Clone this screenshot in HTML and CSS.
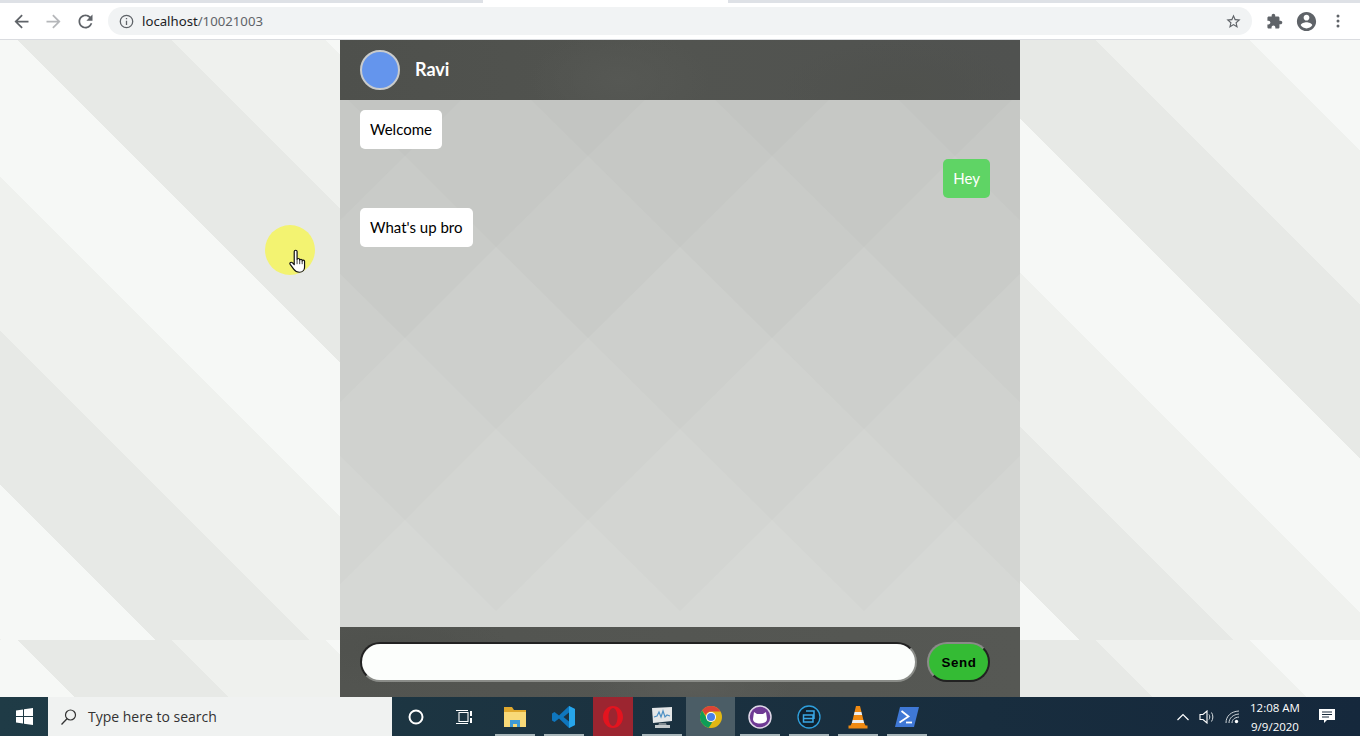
FILE: index.html
```html
<!DOCTYPE html>
<html lang="en">
<head>
<meta charset="utf-8"/>
<title>Chat</title>
<meta name="viewport" content="width=device-width">
<link rel="stylesheet" href="styles.css">
</head>
<body>
<div class="top-strip"><span class="tab-edge"></span></div>
<header class="toolbar">
	<button class="tool"><svg viewBox="0 0 24 24" width="21" height="21"><path fill="#5f6368" d="M20 11H7.83l5.59-5.59L12 4l-8 8 8 8 1.41-1.41L7.83 13H20v-2z"/></svg></button>
	<button class="tool"><svg viewBox="0 0 24 24" width="21" height="21"><path fill="#b5b7ba" d="M4 11h12.17l-5.59-5.59L12 4l8 8-8 8-1.41-1.41L16.17 13H4v-2z"/></svg></button>
	<button class="tool"><svg viewBox="0 0 24 24" width="21" height="21"><path fill="#5f6368" d="M17.65 6.35C16.2 4.9 14.21 4 12 4c-4.42 0-7.99 3.58-7.99 8s3.57 8 7.99 8c3.73 0 6.84-2.55 7.73-6h-2.08c-.82 2.33-3.04 4-5.65 4-3.31 0-6-2.69-6-6s2.69-6 6-6c1.66 0 3.14.69 4.22 1.78L13 11h7V4l-2.35 2.35z"/></svg></button>
	<div class="omnibox">
		<svg class="info" viewBox="0 0 14 14" width="15" height="15"><circle cx="7" cy="7" r="5.8" fill="none" stroke="#5f6368" stroke-width="1.2"/><path fill="#5f6368" d="M6.400 6.200h1.200v4.100H6.400zM6.400 3.700h1.200v1.300H6.400z"/></svg>
		<span class="url"><b>localhost</b>/10021003</span>
		<svg class="star" viewBox="0 0 24 24" width="17" height="17"><path fill="#5f6368" d="M22 9.24l-7.19-.62L12 2 9.19 8.63 2 9.24l5.46 4.73L5.82 21 12 17.27 18.18 21l-1.63-7.03L22 9.24zM12 15.4l-3.76 2.27 1-4.28-3.32-2.88 4.38-.38L12 6.1l1.71 4.04 4.38.38-3.32 2.88 1 4.28L12 15.4z"/></svg>
	</div>
	<button class="tool tool-first"><svg viewBox="0 0 24 24" width="17" height="17"><path fill="#5f6368" d="M20.5 11H19V7c0-1.1-.9-2-2-2h-4V3.5C13 2.12 11.88 1 10.5 1S8 2.12 8 3.5V5H4c-1.1 0-1.99.9-1.99 2v3.8H3.5c1.49 0 2.7 1.21 2.7 2.7s-1.21 2.7-2.7 2.7H2V20c0 1.1.9 2 2 2h3.8v-1.5c0-1.49 1.21-2.7 2.7-2.7 1.49 0 2.7 1.21 2.7 2.7V22H17c1.1 0 2-.9 2-2v-4h1.5c1.38 0 2.5-1.12 2.5-2.5S21.88 11 20.5 11z"/></svg></button>
	<button class="tool"><svg viewBox="0 0 24 24" width="23" height="23"><path fill="#5f6368" d="M12 2C6.48 2 2 6.48 2 12s4.48 10 10 10 10-4.48 10-10S17.52 2 12 2zm0 3c1.66 0 3 1.34 3 3s-1.34 3-3 3-3-1.34-3-3 1.34-3 3-3zm0 14.2c-2.5 0-4.71-1.28-6-3.22.03-1.99 4-3.08 6-3.08 1.99 0 5.97 1.09 6 3.08-1.29 1.94-3.5 3.22-6 3.22z"/></svg></button>
	<button class="tool"><svg viewBox="0 0 16 16" width="16" height="16"><circle cx="8" cy="3" r="1.500" fill="#5f6368"/><circle cx="8" cy="8" r="1.500" fill="#5f6368"/><circle cx="8" cy="13" r="1.500" fill="#5f6368"/></svg></button>
</header>

<main class="page">
	<section class="chat">
		<div class="chat-head">
			<span class="avatar"></span>
			<span class="name">Ravi</span>
		</div>
		<div class="messages">
			<p class="msg">Welcome</p>
			<p class="msg msg-me">Hey</p>
			<p class="msg">What's up bro</p>
		</div>
		<form class="chat-foot">
			<input class="chat-input" type="text" aria-label="Message">
			<button class="send" type="button">Send</button>
		</form>
	</section>
	<div class="pointer">
		<svg viewBox="0 0 16 24" width="19" height="26" preserveAspectRatio="none"><path fill="#fff" stroke="#111" stroke-width="1" stroke-linejoin="round" d="M4.4 2.3c0-1.6 2.4-1.6 2.4 0v7.4c0-1.3 2.2-1.3 2.2 0v.6c0-1.2 2.1-1.2 2.1 0v.8c0-1.1 2-1.1 2 .1v5.6c0 2.5-1.6 4.6-4.4 4.6-2.3 0-3.5-.9-4.6-2.6L1 14.200c-.9-1.500.9-2.700 2-1.400l1.400 1.700z"/><path stroke="#111" stroke-width=".7" d="M6.800 10v4M9 10.500v3.500M11.100 11v3"/></svg>
	</div>
</main>

<footer class="taskbar">
	<div class="start"><svg viewBox="0 0 17 17" width="17" height="17"><path fill="#fff" d="M0 2.500l7-1v6.500H0zM8 1.300L17 0v8H8zM0 9h7v6.500l-7-1zM8 9h9v8l-9-1.300z"/></svg></div>
	<div class="search">
		<svg viewBox="0 0 18 18" width="18" height="18"><circle cx="10.500" cy="7" r="5" fill="none" stroke="#333" stroke-width="1.200"/><path stroke="#333" stroke-width="1.300" d="M7 10.800l-5.500 5.700"/></svg>
		<span>Type here to search</span>
	</div>
	<div class="task-btn"><svg viewBox="0 0 16 16" width="16" height="16"><circle cx="8" cy="8" r="6.500" fill="none" stroke="#fff" stroke-width="2"/></svg></div>
	<div class="task-btn task-view"><svg viewBox="0 0 18 16" width="18" height="16"><path fill="none" stroke="#fff" stroke-width="1.100" d="M4 3.500h9v9H4zM1 1.500h12M1 14.500h12"/><path fill="#fff" d="M15 2h2v5h-2zM15 9h2v5h-2z"/></svg></div>
	<div class="apps">
		<div class="app running">
			<svg viewBox="0 0 24 24" width="24" height="24"><path fill="#e0a92e" d="M1 2h8l2 3h12v3H1z"/><path fill="#f8d978" d="M1 7h22v15H1z"/><path fill="#3f9bd8" d="M7 15h10v7h-3v-3h-4v3H7z"/></svg>
		</div>
		<div class="app running">
			<svg viewBox="0 0 24 24" width="24" height="24"><path fill="#0f76bd" d="M17 1l6 3v16l-6 3-10-9.500-4.500 3.500L0 15.500v-7L2.500 7 7 10.500zM17 7.500L11.500 12l5.500 4.500z"/><path fill="#27a5ea" d="M17 1l6 3v16l-6 3z"/></svg>
		</div>
		<div class="app app-opera">
			<svg viewBox="0 0 24 24" width="24" height="24"><path fill="#e3141f" fill-rule="evenodd" d="M12 1c5.500 0 10 4.900 10 11s-4.500 11-10 11S2 18.100 2 12 6.500 1 12 1zm0 2c-2.500 0-4.500 4-4.500 9s2 9 4.500 9 4.500-4 4.500-9-2-9-4.500-9z"/></svg>
		</div>
		<div class="app running">
			<svg viewBox="0 0 24 24" width="24" height="24"><path fill="#e4e7e8" d="M2 3l20-1v14L3 18z"/><path fill="#7f8a90" d="M9 18h7l1 3H8z"/><path fill="#c4cacc" d="M5 20h15v3H5z"/><path fill="none" stroke="#4c90c4" stroke-width="1.200" d="M4 12l3-1 2-4 2 5 2-6 2 6 2-2 3 1"/></svg>
		</div>
		<div class="app app-active">
			<svg viewBox="0 0 24 24" width="24" height="24"><circle cx="12" cy="12" r="11" fill="#e2b714"/><path fill="#db4437" d="M12 1a11 11 0 0 1 9.500 5.500H12a5.500 5.500 0 0 0-5.200 3.600L3.200 5.400A11 11 0 0 1 12 1z"/><path fill="#0f9d58" d="M3.200 5.400L7.500 13a5.500 5.500 0 0 0 5.800 4.300L9.700 22.800A11 11 0 0 1 3.200 5.400z"/><circle cx="12" cy="12" r="5" fill="#fff"/><circle cx="12" cy="12" r="4" fill="#4a80e8"/></svg>
		</div>
		<div class="app running">
			<svg viewBox="0 0 24 24" width="24" height="24"><circle cx="12" cy="12" r="11" fill="#6f3a94" stroke="#e0d8e8" stroke-width="1.500"/><path fill="#fff" d="M6 7l3 2h6l3-2 1 7c0 3-3 4.500-7 4.500S5 17 5 14z"/></svg>
		</div>
		<div class="app running">
			<svg viewBox="0 0 24 24" width="24" height="24"><circle cx="12" cy="12" r="11" fill="#0f2230" stroke="#2f9fdc" stroke-width="1.300"/><path fill="none" stroke="#3aa7e4" stroke-width="1.500" d="M9 6h8v8M6.500 10h9.500v7H6.500zM6.500 13.500h9.500"/></svg>
		</div>
		<div class="app running">
			<svg viewBox="0 0 24 24" width="24" height="24"><path fill="#f08a12" d="M10 1h4l1.500 6h-7zM7.800 10h8.400l1.200 5H6.600zM5.800 18h12.400l1.300 2.500h2v3h-19v-3h2z"/><path fill="#eee" d="M8.500 7h7l.7 3H7.800zM6.600 15h10.800l.8 3H5.800z"/></svg>
		</div>
		<div class="app running">
			<svg viewBox="0 0 24 24" width="24" height="24"><path fill="#3f78d6" d="M5 2h19l-5 20H0z"/><path fill="none" stroke="#fff" stroke-width="1.800" d="M6.500 6l7 5.500-9 6"/><path stroke="#fff" stroke-width="1.800" d="M11 17.500h6"/></svg>
		</div>
	</div>
	<div class="tray">
		<svg class="tray-chevron" viewBox="0 0 12 8" width="12" height="8"><path fill="none" stroke="#fff" stroke-width="1.200" d="M.5 7L6 1.500 11.500 7"/></svg>
		<svg class="tray-sound" viewBox="0 0 17 14" width="17" height="14"><path fill="none" stroke="#fff" stroke-width="1.100" d="M1 4.500h3L8 1v12L4 9.500H1z"/><path fill="none" stroke="#d7dde0" stroke-width="1" d="M10 4.500c1 1.500 1 3.500 0 5M12.500 2.500c1.800 2.700 1.800 6.300 0 9"/></svg>
		<svg class="tray-wifi" viewBox="0 0 15 14" width="15" height="14"><path fill="none" stroke="#cfd6da" stroke-width="1" d="M1 13C1 6 6 1.500 14 1M4 13c0-5 4-8.500 10-9M7 13c0-3.500 2.500-5.500 7-6"/><circle cx="11.500" cy="11.500" r="1.700" fill="#fff"/></svg>
		<div class="clock"><span>12:08 AM</span><span>9/9/2020</span></div>
		<svg class="tray-note" viewBox="0 0 17 15" width="17" height="15"><path fill="#fff" d="M0 0h16v11H8l-3 3v-3H0z"/><path stroke="#1a2b3c" stroke-width="1" d="M3 3h10M3 5.500h10M3 8h7"/></svg>
	</div>
</footer>
</body>
</html>
```

FILE: styles.css
```css
html, body {
	margin:0;
	height:100%;
	overflow:hidden;
}
body {
	display:flex;
	flex-direction:column;
	background:#fff;
	font:400 15px/1.2 Lato, sans-serif;
}
button {
	padding:0;
	border:0;
	background:none;
}

/* browser chrome */
.top-strip {
	height:3px;
	background:#dee1e6;
}
.tab-edge {
	display:block;
	width:245px;
	height:3px;
	margin-left:483px;
	background:#fff;
}
.toolbar {
	display:flex;
	align-items:center;
	height:37px;
	padding-left:5px;
	box-sizing:border-box;
	background:#fff;
	border-bottom:1px solid #dadce0;
}
.tool {
	display:flex;
	align-items:center;
	justify-content:center;
	width:32px;
	height:28px;
}
.tool-first {
	margin-left:6px;
}
.omnibox {
	display:flex;
	align-items:center;
	width:1144px;
	height:28px;
	margin-left:7px;
	padding:0 10px 0 11px;
	box-sizing:border-box;
	border-radius:14px;
	background:#f1f3f4;
}
.url {
	flex:1;
	margin-left:8px;
	color:#5f6368;
	font:400 13.2px "Noto Sans", sans-serif;
}
.url b {
	font-weight:400;
	color:#202124;
}

/* page */
.page {
	position:relative;
	flex:1;
	display:flex;
	justify-content:center;
	background:repeating-linear-gradient(225deg, #f6f8f6 0 78.4px, #eff1ee 78.4px 187.3px, #e7e9e6 187.3px 296.2px, #f6f8f6 296.2px 326.7px) 0 0/1360px 600px;
}
.chat {
	display:flex;
	flex-direction:column;
	width:680px;
}
.chat-head {
	display:flex;
	align-items:center;
	height:60px;
	padding-left:20px;
	box-sizing:border-box;
	background:radial-gradient(ellipse 90px 50px at 280px 40px, #565854, transparent), radial-gradient(ellipse 120px 50px at 560px 50px, #4f514d, transparent), linear-gradient(90deg, #4e504c, #525450 50%, #505250);
}
.avatar {
	width:36px;
	height:36px;
	border:2px solid #c9cbcc;
	border-radius:50%;
	background:#6495ed;
}
.name {
	margin-left:15px;
	color:#fff;
	font-size:18px;
	font-weight:700;
}
.messages {
	flex:1;
	display:flex;
	flex-direction:column;
	align-items:flex-start;
	gap:10px;
	padding:10px 30px 0 20px;
	background:url("data:image/svg+xml,<svg xmlns='http://www.w3.org/2000/svg' width='680' height='527'><rect width='680' height='527' fill='%23c3c5c2'/><polygon fill='%23c6c8c5' points='-27,-35 65,56 156,-35 248,56 340,-35 432,56 524,-35 615,56 707,-35 707,527 -27,527'/><polygon fill='%23c9cbc8' points='-27,147 65,56 156,147 248,56 340,147 432,56 524,147 615,56 707,147 707,527 -27,527'/><polygon fill='%23cdcfcc' points='-27,147 65,238 156,147 248,238 340,147 432,238 524,147 615,238 707,147 707,527 -27,527'/><polygon fill='%23d0d2cf' points='-27,329 65,238 156,329 248,238 340,329 432,238 524,329 615,238 707,329 707,527 -27,527'/><polygon fill='%23d3d5d2' points='-27,329 65,420 156,329 248,420 340,329 432,420 524,329 615,420 707,329 707,527 -27,527'/><polygon fill='%23d6d8d5' points='-27,511 65,420 156,511 248,420 340,511 432,420 524,511 615,420 707,511 707,527 -27,527'/></svg>") 0 0 no-repeat;
}
.msg {
	margin:0;
	padding:10px;
	border-radius:5px;
	background:#fff;
	color:#000;
	line-height:19px;
}
.msg-me {
	align-self:flex-end;
	background:#5fd465;
	color:#fff;
}
.chat-foot {
	display:flex;
	align-items:center;
	gap:10px;
	height:70px;
	padding:0 30px 0 20px;
	box-sizing:border-box;
	background:radial-gradient(ellipse 120px 40px at 50px 20px, #4f514d, transparent), radial-gradient(ellipse 100px 30px at 350px 60px, #5a5c58, transparent), linear-gradient(90deg, #525450, #565854);
}
.chat-input {
	flex:1;
	height:40px;
	padding:0 10px;
	box-sizing:border-box;
	border:2px solid;
	border-color:#222 #8a8c88 #8a8c88 #222;
	border-radius:20px;
	background:#fcfefc;
	outline:none;
}
.send {
	width:63px;
	height:40px;
	padding-left:1px;
	box-sizing:border-box;
	border:2px solid;
	border-color:#8a8c88 #222 #222 #8a8c88;
	border-radius:20px;
	background:#34bb34;
	color:#000;
	font:700 13.33px "Liberation Sans", sans-serif;
	letter-spacing:.6px;
}
.pointer {
	position:absolute;
	left:265px;
	top:185px;
	width:50px;
	height:50px;
	border-radius:50%;
	background:#f3f371;
}
.pointer svg {
	position:absolute;
	left:24px;
	top:24px;
}

/* windows taskbar */
.taskbar {
	display:flex;
	height:39px;
	background:linear-gradient(90deg, #1f3b46, #1b3240 45%, #15283c);
	color:#fff;
}
.start {
	display:flex;
	align-items:center;
	justify-content:center;
	width:48px;
}
.search {
	display:flex;
	align-items:center;
	width:344px;
	padding-left:12px;
	box-sizing:border-box;
	background:#f0f2f1;
	color:#333;
	font:400 14px "Open Sans", sans-serif;
}
.search span {
	margin-left:10px;
}
.task-btn {
	display:flex;
	align-items:center;
	justify-content:center;
	width:48px;
}
.apps {
	display:flex;
	margin-left:2px;
}
.app {
	display:flex;
	align-items:center;
	justify-content:center;
	width:49px;
}
.running {
	background:linear-gradient(#a8b6ba, #a8b6ba) center bottom/40px 2px no-repeat;
}
.app-opera {
	background:linear-gradient(#9c2530, #9c2530) center/40px 100% no-repeat;
}
.app-active {
	background:#4b5d66;
}
.tray {
	display:flex;
	align-items:center;
	margin-left:auto;
	padding-right:24px;
}
.tray-sound {
	margin-left:10px;
}
.tray-wifi {
	margin-left:9px;
}
.clock {
	display:flex;
	flex-direction:column;
	align-items:center;
	width:60px;
	margin-left:5px;
	white-space:nowrap;
	font:400 11.5px/19px "Open Sans", sans-serif;
}
.tray-note {
	margin-left:14px;
}
```
